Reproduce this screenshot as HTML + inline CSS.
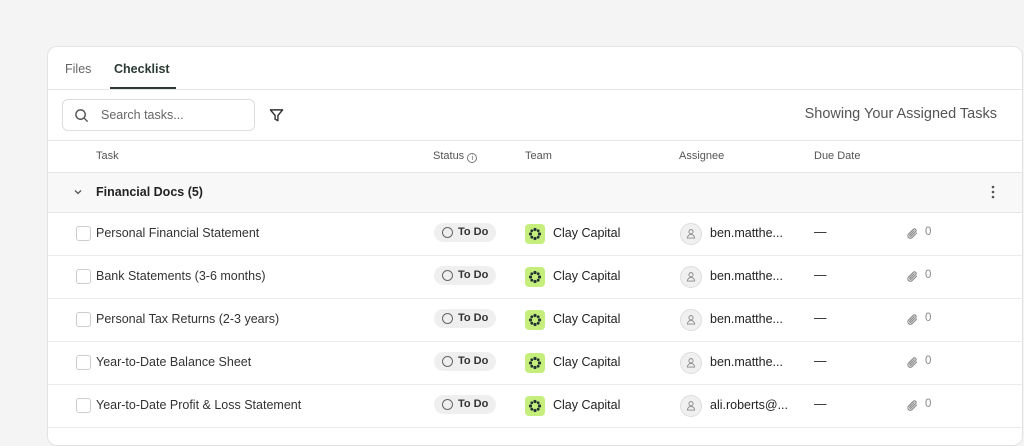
<!DOCTYPE html>
<html><head><style>
*{box-sizing:border-box;margin:0;padding:0}
body{width:1024px;height:428px;background:#f4f4f4;font-family:"Liberation Sans",sans-serif;color:#222;overflow:hidden;position:relative}
.card{position:absolute;left:47px;top:46px;width:976px;height:400px;background:#fff;border:1px solid #e3e3e3;border-radius:10px;overflow:hidden}
.abs{position:absolute}
.tabs{height:43px;border-bottom:1px solid #e6e6e6;position:relative}
.t{position:absolute;top:15px;font-size:12.5px}
.tool{height:51px;border-bottom:1px solid #e6e6e6;position:relative}
.search{position:absolute;left:14px;top:9px;width:193px;height:32px;border:1px solid #ddd;border-radius:6px}
.hdr{height:32px;border-bottom:1px solid #e6e6e6;position:relative;font-size:11px;color:#555}
.hdr span{position:absolute;top:9px}
.grp{height:40px;background:#f8f8f8;border-bottom:1px solid #e6e6e6;position:relative}
.row{height:43px;border-bottom:1px solid #ebebeb;position:relative;font-size:12.5px}
.row>*{position:absolute}
.cb{left:28px;top:13px;width:15px;height:15px;border:1px solid #ccc;border-radius:3px}
.tn{left:48px;top:13px;color:#333}
.st{left:386px;top:10px;width:62px;height:19px;background:#efefef;border-radius:10px;font-size:11px;font-weight:bold;color:#333;padding:3px 0 0 24px}
.st:before{content:"";position:absolute;left:8px;top:4px;width:9px;height:9px;border:1px solid #666;border-radius:50%}
.tm{left:477px;top:11px;width:20px;height:20px}
.tt{left:505px;top:13px}
.av{left:632px;top:10px;width:22px;height:22px;border-radius:50%;background:#f0f0f0;border:1px solid #ddd}
.an{left:662px;top:13px}
.dd{left:766px;top:12px}
.at{left:859px;top:13px;color:#888;font-size:11.5px}
</style></head><body>
<svg width="0" height="0" style="position:absolute"><defs>
<symbol id="tm" viewBox="0 0 20 20"><rect width="20" height="20" rx="4" fill="#c6ee7d"/><g fill="#233"><circle cx="10" cy="5.5" r="1.6"/><circle cx="10" cy="14.5" r="1.6"/><circle cx="5.5" cy="10" r="1.6"/><circle cx="14.5" cy="10" r="1.6"/><circle cx="6.8" cy="6.8" r="1.4"/><circle cx="13.2" cy="6.8" r="1.4"/><circle cx="6.8" cy="13.2" r="1.4"/><circle cx="13.2" cy="13.2" r="1.4"/></g></symbol>
<symbol id="pc" viewBox="0 0 16 16"><path d="M13 7.5l-5.5 5.5a3 3 0 0 1-4.3-4.3l6-6a2 2 0 0 1 2.8 2.8l-5.8 5.8a1 1 0 0 1-1.4-1.4l5.3-5.3" fill="none" stroke="#888" stroke-width="1.4" stroke-linecap="round"/></symbol>
<symbol id="pe" viewBox="0 0 22 22"><circle cx="11" cy="8.5" r="2.3" fill="none" stroke="#888" stroke-width="1"/><path d="M7 15.5a4 4 0 0 1 8 0z" fill="none" stroke="#888" stroke-width="1"/></symbol>
</defs></svg>
<div class="card">
<div class="tabs">
<span class="t" style="left:17px;color:#666">Files</span>
<span class="t" style="left:66px;font-weight:bold;color:#2b3a33">Checklist</span>
<div class="abs" style="left:62px;top:40px;width:66px;height:2px;background:#2b3a33"></div>
</div>
<div class="tool">
<div class="search">
<svg class="abs" style="left:11px;top:8px" width="15" height="15" viewBox="0 0 16 16" fill="none" stroke="#555" stroke-width="1.5"><circle cx="7" cy="7" r="5"/><path d="M11 11l3.5 3.5"/></svg>
<span class="abs" style="left:38px;top:8px;font-size:12.5px;color:#666">Search tasks...</span>
</div>
<svg class="abs" style="left:221px;top:18px" width="15" height="15" viewBox="0 0 16 16" fill="none" stroke="#333" stroke-width="1.5" stroke-linejoin="round"><path d="M1.5 2h13l-5 6v5.5l-3-1.5V8z"/></svg>
<span class="abs" style="right:25px;top:16px;font-size:14.5px;color:#555">Showing Your Assigned Tasks</span>
</div>
<div class="hdr">
<span style="left:48px">Task</span>
<span style="left:385px">Status <span style="position:static;display:inline-block;width:10px;height:10px;border:1px solid #777;border-radius:50%;font-size:7px;text-align:center;line-height:9px;vertical-align:-1px">i</span></span>
<span style="left:477px">Team</span>
<span style="left:631px">Assignee</span>
<span style="left:766px">Due Date</span>
</div>
<div class="grp">
<svg class="abs" style="left:25px;top:15px" width="10" height="8" viewBox="0 0 10 8"><path d="M2 2.5l3 3 3-3" fill="none" stroke="#555" stroke-width="1.3"/></svg>
<span class="abs" style="left:48px;top:12px;font-size:12.5px;font-weight:bold;color:#222">Financial Docs (5)</span>
<svg class="abs" style="left:943px;top:12px" width="4" height="14" viewBox="0 0 4 14" fill="#555"><circle cx="2" cy="2" r="1.3"/><circle cx="2" cy="7" r="1.3"/><circle cx="2" cy="12" r="1.3"/></svg>
</div>
<div class="row"><div class="cb"></div><span class="tn">Personal Financial Statement</span><div class="st">To Do</div><svg class="tm"><use href="#tm"/></svg><span class="tt">Clay Capital</span><svg class="av"><use href="#pe"/></svg><span class="an">ben.matthe...</span><span class="dd">—</span><svg class="abs" style="left:858px;top:14px" width="13" height="13"><use href="#pc"/></svg><span class="at" style="left:877px">0</span></div>
<div class="row"><div class="cb"></div><span class="tn">Bank Statements (3-6 months)</span><div class="st">To Do</div><svg class="tm"><use href="#tm"/></svg><span class="tt">Clay Capital</span><svg class="av"><use href="#pe"/></svg><span class="an">ben.matthe...</span><span class="dd">—</span><svg class="abs" style="left:858px;top:14px" width="13" height="13"><use href="#pc"/></svg><span class="at" style="left:877px">0</span></div>
<div class="row"><div class="cb"></div><span class="tn">Personal Tax Returns (2-3 years)</span><div class="st">To Do</div><svg class="tm"><use href="#tm"/></svg><span class="tt">Clay Capital</span><svg class="av"><use href="#pe"/></svg><span class="an">ben.matthe...</span><span class="dd">—</span><svg class="abs" style="left:858px;top:14px" width="13" height="13"><use href="#pc"/></svg><span class="at" style="left:877px">0</span></div>
<div class="row"><div class="cb"></div><span class="tn">Year-to-Date Balance Sheet</span><div class="st">To Do</div><svg class="tm"><use href="#tm"/></svg><span class="tt">Clay Capital</span><svg class="av"><use href="#pe"/></svg><span class="an">ben.matthe...</span><span class="dd">—</span><svg class="abs" style="left:858px;top:14px" width="13" height="13"><use href="#pc"/></svg><span class="at" style="left:877px">0</span></div>
<div class="row"><div class="cb"></div><span class="tn">Year-to-Date Profit &amp; Loss Statement</span><div class="st">To Do</div><svg class="tm"><use href="#tm"/></svg><span class="tt">Clay Capital</span><svg class="av"><use href="#pe"/></svg><span class="an">ali.roberts@...</span><span class="dd">—</span><svg class="abs" style="left:858px;top:14px" width="13" height="13"><use href="#pc"/></svg><span class="at" style="left:877px">0</span></div>
</div>
</body></html>
